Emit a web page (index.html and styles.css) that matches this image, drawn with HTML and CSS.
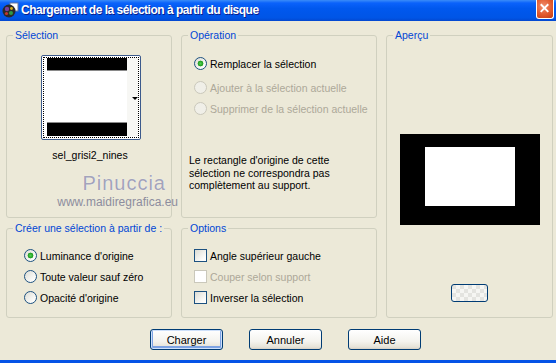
FILE: index.html
```html
<!DOCTYPE html>
<html lang="fr">
	<head>
		<meta charset="UTF-8" />
		<title>Chargement de la sélection</title>
		<link rel="stylesheet" href="styles.css">
	</head>
	<body>
		<div class="window">
			<div class="titlebar">
				<svg class="app-icon" width="17" height="16" viewBox="0 0 17 16">
					<rect x="8" y="1" width="8" height="8" fill="#fff" stroke="#6a7a9a" />
					<circle cx="7" cy="9" r="6.5" fill="#2a2a2a" />
					<circle cx="5" cy="7" r="2.2" fill="#7a3f9a" />
					<circle cx="9" cy="11" r="2" fill="#2f9a45" />
					<circle cx="4.5" cy="11.5" r="1.6" fill="#c0392b" />
					<circle cx="9.5" cy="6.5" r="1.4" fill="#d4b01c" />
				</svg>
				<span class="title">Chargement de la sélection à partir du disque</span>
				<span class="close">
					<svg width="18" height="19" viewBox="0 0 18 19">
						<path d="M5 5 L13 13 M13 5 L5 13" stroke="#fff" stroke-width="2" />
					</svg>
				</span>
			</div>

			<div class="client">
				<fieldset class="group sel">
					<legend>Sélection</legend>
					<div class="thumb">
						<div class="thumb-focus">
							<div class="pic">
								<div class="bar top"></div>
								<div class="blank"></div>
								<div class="bar bottom"></div>
							</div>
							<div class="strip"><span class="arrow"></span></div>
						</div>
					</div>
					<div class="thumb-name">sel_grisi2_nines</div>
				</fieldset>

				<fieldset class="group op">
					<legend>Opération</legend>
					<label class="opt first"><input type="radio" name="op" checked /> Remplacer la sélection</label>
					<label class="opt off"><input type="radio" name="op" disabled /> Ajouter à la sélection actuelle</label>
					<label class="opt off"><input type="radio" name="op" disabled /> Supprimer de la sélection actuelle</label>
					<p class="note">Le rectangle d'origine de cette<br />sélection ne correspondra pas<br />complètement au support.</p>
				</fieldset>

				<fieldset class="group preview">
					<legend>Aperçu</legend>
					<div class="preview-img"><div class="preview-sel"></div></div>
					<button class="xp-btn small" type="button"></button>
				</fieldset>

				<fieldset class="group create">
					<legend>Créer une sélection à partir de :</legend>
					<label class="opt"><input type="radio" name="src" checked /> Luminance d'origine</label>
					<label class="opt"><input type="radio" name="src" /> Toute valeur sauf zéro</label>
					<label class="opt"><input type="radio" name="src" /> Opacité d'origine</label>
				</fieldset>

				<fieldset class="group options">
					<legend>Options</legend>
					<label class="opt"><input type="checkbox" /> Angle supérieur gauche</label>
					<label class="opt off"><input type="checkbox" disabled /> Couper selon support</label>
					<label class="opt"><input type="checkbox" /> Inverser la sélection</label>
				</fieldset>
			</div>

			<div class="actions">
				<button class="xp-btn default" type="button">Charger</button>
				<button class="xp-btn" type="button">Annuler</button>
				<button class="xp-btn" type="button">Aide</button>
			</div>

			<div class="watermark">
				<span class="wm-name">Pinuccia</span>
				<span class="wm-url">www.maidiregrafica.eu</span>
			</div>
		</div>
	</body>
</html>
```

FILE: styles.css
```css
body {
	margin: 0;
	font-family: "Liberation Sans", Arial, sans-serif;
	font-size: 10.5px;
	color: #000;
}

.window {
	position: relative;
	width: 556px;
	height: 363px;
	box-sizing: border-box;
	background-color: #ece9d8;
	border-bottom: 3px solid #0553e6;
	overflow: hidden;
}

.titlebar {
	display: flex;
	align-items: center;
	height: 21px;
	padding-left: 2px;
	background: linear-gradient(#3a8cf8 0, #0a62fb 3px, #0058ee 40%, #0055e6 85%, #0347cf 100%);
	color: #fff;
}

.app-icon {
	flex: none;
	margin-right: 2px;
	margin-top: -1px;
}

.title {
	flex: 1;
	font-size: 12px;
	font-weight: bold;
	letter-spacing: -0.5px;
	text-shadow: 1px 1px 0 #0a1e8c;
	margin-top: -1px;
}

.close {
	align-self: flex-start;
	width: 18px;
	height: 19px;
	margin-right: 2px;
	box-sizing: border-box;
	border: 1px solid #fff;
	border-top: none;
	border-radius: 0 0 3px 3px;
	background: radial-gradient(circle at 40% 35%, #f09070 0, #e25a2e 55%, #c23b12 100%);
	display: flex;
}

.close svg {
	margin: -1px 0 0 -1px;
}

.client {
	display: grid;
	grid-template-columns: 166px 196px 167px;
	grid-template-rows: 190px 97px;
	column-gap: 9px;
	row-gap: 3px;
	padding: 7px 3px 0 6px;
}

.group {
	margin: 0;
	padding: 0;
	min-width: 0;
	border: 1px solid #d0d0bf;
	border-radius: 3px;
}

.group legend {
	margin-left: 6px;
	padding: 0 2px;
	line-height: 14px;
	white-space: nowrap;
	color: #0046d5;
}

.preview {
	grid-column: 3;
	grid-row: 1 / span 2;
	display: flex;
	flex-direction: column;
	align-items: center;
}

/* selection thumbnail */
.thumb {
	width: 100px;
	height: 85px;
	box-sizing: border-box;
	margin: 13px 0 0 34px;
	padding: 1px;
	border: 1px solid #3c5a8c;
	border-radius: 2px;
	background-color: #fff;
}

.thumb-focus {
	display: flex;
	height: 100%;
	box-sizing: border-box;
	border: 1px dotted #000;
	padding: 0 0 1px 3px;
}

.pic {
	display: flex;
	flex-direction: column;
	width: 80px;
}

.bar {
	background-color: #000;
}

.bar.top {
	height: 12px;
	border-bottom: 1px solid #8a8a8a;
}

.bar.bottom {
	height: 13px;
	border-top: 1px solid #8a8a8a;
}

.blank {
	flex: 1;
	background-color: #fff;
}

.strip {
	flex: 1;
	display: flex;
	justify-content: flex-end;
	align-items: center;
	background-color: #f7f7f4;
}

.arrow {
	width: 0;
	height: 0;
	margin: 2px 0 0 0;
	border-left: 3px solid transparent;
	border-right: 3px solid transparent;
	border-top: 3px solid #000;
}

.thumb-name {
	margin-top: 9px;
	text-align: center;
	line-height: 13px;
	padding-left: 2px;
}

/* radio / checkbox rows */
.opt {
	display: flex;
	align-items: center;
	height: 21px;
	gap: 3px;
}

.op .opt,
.options .opt {
	padding-left: 12px;
}

.create .opt {
	padding-left: 17px;
}

.op .first {
	margin-top: 11px;
	margin-bottom: 3px;
}

.create .opt:first-of-type,
.options .opt:first-of-type {
	margin-top: 10px;
}

.opt.off {
	color: #aca899;
}

.opt input {
	appearance: none;
	-webkit-appearance: none;
	flex: none;
	width: 13px;
	height: 13px;
	margin: 0;
	box-sizing: border-box;
	border: 1px solid #1c5180;
	background: linear-gradient(135deg, #dcdcd4, #fbfbf9 75%, #fff);
}

.opt input[type="radio"] {
	border-radius: 50%;
}

.opt input[type="radio"]:checked {
	background: radial-gradient(circle, #55d055 0, #2aa82a 2px, #1f9a1f 2.6px, transparent 3.2px), linear-gradient(135deg, #dcdcd4, #fbfbf9 75%, #fff);
}

.opt input:disabled {
	border-color: #cac8bb;
	background: #fff;
}

.opt input[type="radio"]:disabled {
	background: #f0efe8;
}

.note {
	margin: 35px 0 0 7px;
	line-height: 12.5px;
}

/* preview */
.preview-img {
	width: 140px;
	height: 91px;
	box-sizing: border-box;
	margin-top: 92px;
	padding: 13px 25px 19px;
	background-color: #000;
}

.preview-sel {
	height: 100%;
	background-color: #fff;
}

/* buttons */
.xp-btn {
	width: 73px;
	height: 21px;
	padding: 0;
	font-family: inherit;
	font-size: 11px;
	color: #000;
	border: 1px solid #003c74;
	border-radius: 3px;
	background: linear-gradient(#fff, #f4f3ee 60%, #e6e3d8 90%, #d6d0c5);
}

.xp-btn.default {
	box-shadow: inset 0 0 0 1px #cee0fa, inset 0 -1px 0 2px #7ea3e3;
}

.xp-btn.small {
	width: 37px;
	height: 18px;
	margin-top: 59px;
	background:
		repeating-conic-gradient(#f6f6f3 0 25%, #e4e4e0 0 50%) 0 0 / 8px 8px;
}

.actions {
	display: flex;
	gap: 26px;
	padding: 11px 0 0 150px;
}

/* watermark laid over the dialog */
.watermark {
	position: absolute;
	left: 56px;
	top: 172px;
	display: flex;
	flex-direction: column;
	align-items: flex-end;
	width: 122px;
	pointer-events: none;
}

.wm-name {
	font-size: 20px;
	letter-spacing: 1px;
	line-height: 22px;
	color: #a3a3ba;
	text-shadow: 0 0 1px #fff;
	margin-right: 12px;
}

.wm-url {
	font-size: 12px;
	line-height: 14px;
	color: #8d8d9e;
	margin-top: 1px;
}
```
